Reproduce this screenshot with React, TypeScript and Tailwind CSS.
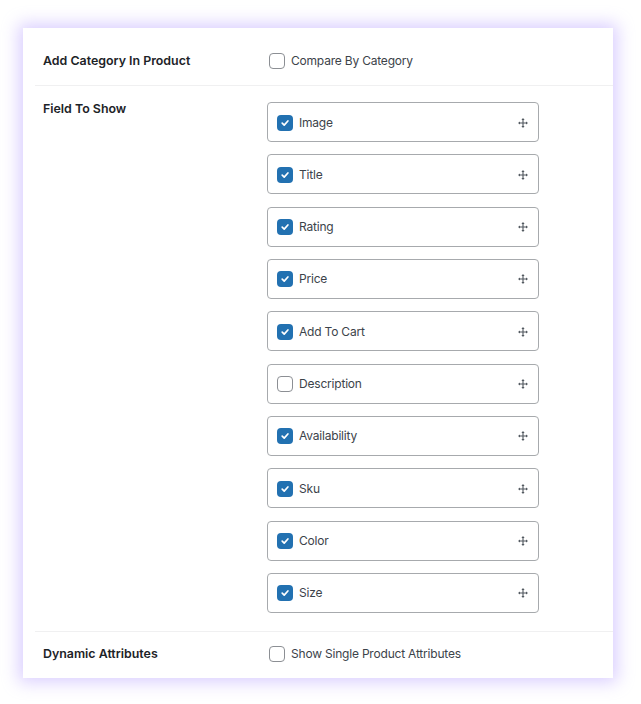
import React from "react";

const fields: { label: string; checked: boolean }[] = [
  { label: "Image", checked: true },
  { label: "Title", checked: true },
  { label: "Rating", checked: true },
  { label: "Price", checked: true },
  { label: "Add To Cart", checked: true },
  { label: "Description", checked: false },
  { label: "Availability", checked: true },
  { label: "Sku", checked: true },
  { label: "Color", checked: true },
  { label: "Size", checked: true },
];

function Box({ checked }: { checked: boolean }) {
  if (checked) {
    return (
      <span className="flex h-4 w-4 shrink-0 items-center justify-center rounded-[4px] bg-[#2271b1]">
        <svg width="10" height="10" viewBox="0 0 10 10">
          <path d="M2.2 5.2 L4.2 7.1 L7.9 3" fill="none" stroke="#fff" strokeWidth="1.7" strokeLinecap="round" strokeLinejoin="round" />
        </svg>
      </span>
    );
  }
  return <span className="block h-4 w-4 shrink-0 rounded-[4px] border border-[#8c8f94] bg-white" />;
}

function MoveIcon() {
  return (
    <svg width="10" height="10" viewBox="0 0 10 10" className="text-[#50575e]">
      <path d="M5 1.5 V8.5 M1.5 5 H8.5" stroke="currentColor" strokeWidth="1.1" />
      <path d="M5 0 L6.6 2 H3.4 Z M5 10 L6.6 8 H3.4 Z M0 5 L2 3.4 V6.6 Z M10 5 L8 3.4 V6.6 Z" fill="currentColor" />
    </svg>
  );
}

export default function App() {
  return (
    <div className="min-h-[704px] bg-white pl-[23px] pt-[28px]" style={{ fontFamily: "Inter, 'Noto Sans', sans-serif" }}>
      <div className="h-[650px] w-[590px] bg-white pl-3 shadow-[0_0_16px_4px_rgba(170,145,255,0.45)]">
        {/* Row 1 */}
        <div className="flex h-[58px] border-b border-[#f0f0f1] pt-[23px]">
          <div className="flex h-5 w-[232px] items-center pl-2 text-[12.4px] font-semibold text-[#1d2327]">
            Add Category In Product
          </div>
          <label className="flex h-5 items-center gap-[6px] pl-[2px] text-[12px] tracking-[-0.2px] text-[#3c434a]">
            <Box checked={false} />
            <span>Compare By Category</span>
          </label>
        </div>

        {/* Row 2 */}
        <div className="flex border-b border-[#f0f0f1] pb-[18px] pt-4">
          <div className="w-[232px] pl-2">
            <div className="-mt-[3px] flex h-5 items-center text-[12.4px] font-semibold text-[#1d2327]">Field To Show</div>
          </div>
          <div className="flex w-[272px] flex-col gap-[12.33px]">
            {fields.map((f) => (
              <div
                key={f.label}
                className="flex h-10 items-center rounded-[4px] border border-[#a7aaad] bg-white pl-[9px] pr-[10px] pt-[1px]"
              >
                <Box checked={f.checked} />
                <span className="ml-[6px] flex-1 text-[12px] tracking-[-0.2px] text-[#3c434a]">{f.label}</span>
                <MoveIcon />
              </div>
            ))}
          </div>
        </div>

        {/* Row 3 */}
        <div className="flex pt-3">
          <div className="flex h-5 w-[232px] items-center pl-2 text-[12.4px] font-semibold text-[#1d2327]">
            Dynamic Attributes
          </div>
          <label className="flex h-5 items-center gap-[6px] pl-[2px] text-[12px] tracking-[-0.2px] text-[#3c434a]">
            <Box checked={false} />
            <span>Show Single Product Attributes</span>
          </label>
        </div>
      </div>
    </div>
  );
}
